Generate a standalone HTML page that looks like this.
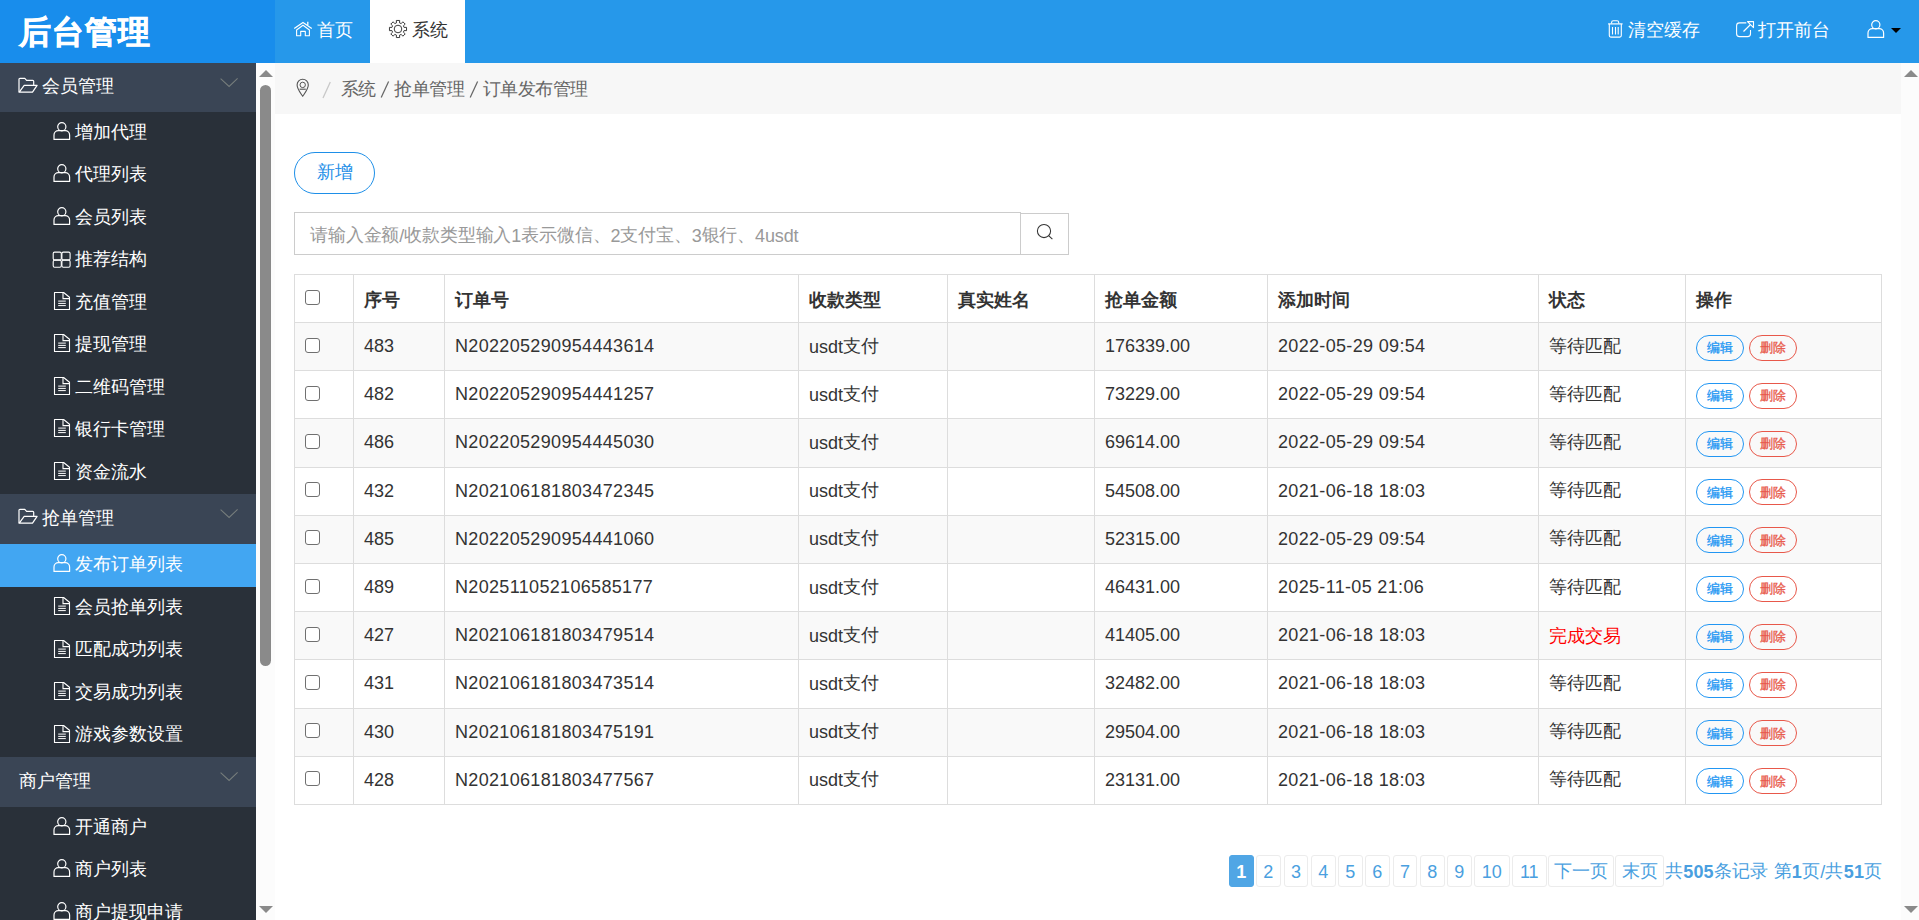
<!DOCTYPE html>
<html><head><meta charset="utf-8">
<style>
*{box-sizing:border-box;margin:0;padding:0}
html,body{width:1919px;height:920px;overflow:hidden;background:#fff;font-family:"Liberation Sans",sans-serif;color:#333}
.abs{position:absolute}
svg{display:block}
#hdr{position:absolute;left:0;top:0;width:1919px;height:63px;background:#2698ea}
#logo{position:absolute;left:0;top:0;width:275px;height:63px;background:#188dec}
#logo span{position:absolute;left:19px;top:11px;font-size:32px;font-weight:bold;-webkit-text-stroke:0.6px #fff;color:#fff;line-height:44px;letter-spacing:1px}
.tab{position:absolute;top:0;height:63px;font-size:18px;line-height:63px;color:#fff}
.tab .ic{position:absolute}
.tab span{position:absolute;top:0}
#side{position:absolute;left:0;top:63px;width:256px;height:857px;background:#293039;overflow:hidden}
.grp{position:relative;height:49px;background:#3a4555;color:#fff;font-size:18px}
.grp span{position:absolute;left:42px;top:0;line-height:49px}
.grp .chev{position:absolute;left:220px;top:15px}
.grp .ic{position:absolute;left:19px;top:15px}
.itm{position:relative;height:42.45px;color:#fff;font-size:18px}
.itm span{position:absolute;left:75px;top:0;line-height:42px}
.itm .ic{position:absolute;left:53px;top:11px}
.itm.act{background:#42a6f2}
#sbar{position:absolute;left:256px;top:63px;width:19px;height:857px;background:#fcfcfc}
#rbar{position:absolute;left:1901px;top:63px;width:18px;height:857px;background:#fcfcfc}
#crumb{position:absolute;left:275px;top:63px;width:1626px;height:51px;background:#f7f7f7;color:#666;font-size:18px}
#main{position:absolute;left:275px;top:114px;width:1626px;height:806px;background:#fff}
.btn-add{position:absolute;left:19px;top:38px;width:81px;height:42px;border:1px solid #1e8fe8;border-radius:21px;color:#1e8fe8;font-size:18px;line-height:40px;text-align:center}
.search{position:absolute;left:19px;top:98px;width:727px;height:43px;border:1px solid #ccc;font-size:18px;color:#999;line-height:47px;padding-left:15px;letter-spacing:-0.15px;white-space:nowrap}
.sbtn{position:absolute;left:745px;top:99px;width:49px;height:42px;border:1px solid #ccc;background:#fff}
table{position:absolute;left:19px;top:160px;border-collapse:collapse;font-size:18px;color:#333}
td,th{border:1px solid #ddd;height:48.2px;padding:0 10px;text-align:left;white-space:nowrap}
th{font-weight:bold;height:48px;padding-top:4px}
tr.odd td{background:#f9f9f9}
.cb{width:15px;height:15px;border:1.2px solid #707070;border-radius:3px;background:#fff;position:relative;left:-0.5px;top:-1.5px}
th .cb{top:-3px}
td.ls{letter-spacing:0.33px}
.op{display:inline-block;width:48px;height:26px;border:1px solid #2196f3;border-radius:13px;color:#2196f3;font-size:13px;line-height:24px;text-align:center;font-weight:normal;-webkit-text-stroke:0.3px currentColor;vertical-align:middle;position:relative;top:1px}
.op i.c{top:0.5px}
.op.del{border-color:#e8584a;color:#e8584a;margin-left:5px}
.pg{position:absolute;top:741px;height:32px;border:1px solid #ececec;border-radius:3px;color:#4a9fe0;font-size:18px;line-height:32px;text-align:center}
.pg.on{background:#50a6e5;border-color:#50a6e5;color:#fff;font-weight:bold}
.tab.on{background:#fff;color:#333}
.caret{position:absolute;left:24px;top:28px;width:0;height:0;border-left:5px solid transparent;border-right:5px solid transparent;border-top:5px solid #000}
.arr{position:absolute;left:3px;width:0;height:0;border-left:7px solid transparent;border-right:7px solid transparent}
.arr.up{top:7px;border-bottom:7px solid #8a8a8a}
.arr.dn{top:843px;border-top:7px solid #8a8a8a}
.thumb{position:absolute;left:4px;top:22px;width:11px;height:581px;border-radius:6px;background:#8a8a8a}
#crumb .sep{position:absolute;left:47px;top:0;line-height:51px;color:#ccc}
#crumb .path{position:absolute;left:66px;top:2px;line-height:51px;letter-spacing:-0.55px}
#crumb .bs{display:inline-block;width:18.5px;vertical-align:-2px}
#crumb .bs svg{margin-left:0.5px}
td.red{color:#ff0000}
td.red i.c{top:0}
.pginfo{position:absolute;left:1390px;top:743px;line-height:31px;font-size:18px;color:#4a9fe0;white-space:nowrap;letter-spacing:0.2px}
.pginfo b{font-weight:bold}
i.c{font-style:normal;position:relative;top:-1px}
</style></head><body>
<div id="hdr">
  <div id="logo"><span><i class="c">后台管理</i></span></div>
  <div class="tab" style="left:275px;width:95px"><svg class="ic" width="20" height="18" viewBox="0 0 20 18" style="position:absolute;left:18px;top:20px" fill="none" stroke="#fff"><path d="M1.2 8.6L10 2.4l8.8 6.2" stroke-width="1.2" stroke-linejoin="round"/><path d="M14.8 1.8v3.4" stroke-width="1.3"/><path d="M3.6 15.8V10L10 5.2l6.4 4.8v5.8h-4.1v-4.4H7.7v4.4z" stroke-width="1.1" stroke-linejoin="round"/></svg><span style="left:42px"><i class="c">首页</i></span></div>
  <div class="tab on" style="left:370px;width:95px"><svg class="ic" width="20" height="20" viewBox="0 0 20 20" style="position:absolute;left:17.8px;top:18.9px" fill="none" stroke="#333"><path d="M8.48 3.89 L8.34 1.46 L11.66 1.46 L11.52 3.89 L13.24 4.60 L14.86 2.79 L17.21 5.14 L15.40 6.76 L16.11 8.48 L18.54 8.34 L18.54 11.66 L16.11 11.52 L15.40 13.24 L17.21 14.86 L14.86 17.21 L13.24 15.40 L11.52 16.11 L11.66 18.54 L8.34 18.54 L8.48 16.11 L6.76 15.40 L5.14 17.21 L2.79 14.86 L4.60 13.24 L3.89 11.52 L1.46 11.66 L1.46 8.34 L3.89 8.48 L4.60 6.76 L2.79 5.14 L5.14 2.79 L6.76 4.60Z" stroke-width="0.95" stroke-linejoin="round"/><circle cx="10" cy="10" r="3.8" stroke-width="0.95"/></svg><span style="left:42px"><i class="c">系统</i></span></div>
  <div class="tab" style="left:1608px;width:100px"><svg class="ic" width="17" height="20" viewBox="0 0 17 20" style="position:absolute;left:-1px;top:19px" fill="none" stroke="#fff"><path d="M1.1 4.9h14.5" stroke-width="1.2"/><path d="M4.6 4.6V3.5c0-1 .7-1.8 1.7-1.8h3.7c1 0 1.7.8 1.7 1.8v1.1" stroke-width="1.1"/><path d="M2.3 5v11.6c0 .9.6 1.5 1.5 1.5h9c.9 0 1.5-.6 1.5-1.5V5" stroke-width="1.1"/><path d="M5.5 8v7.5M8.5 8v7.5M11.2 8v7.5" stroke-width="1.1"/></svg><span style="left:20px"><i class="c">清空缓存</i></span></div>
  <div class="tab" style="left:1736px;width:100px"><svg class="ic" width="20" height="19" viewBox="0 0 20 19" style="position:absolute;left:-1px;top:20px" fill="none" stroke="#fff"><path d="M11.3 2.9H4.5c-1.6 0-2.9 1.3-2.9 2.9v7.9c0 1.6 1.3 2.9 2.9 2.9h8.1c1.6 0 2.9-1.3 2.9-2.9V10" stroke-width="1.1"/><path d="M12.5 1.6h6v6z" stroke-width="1.1" stroke-linejoin="round"/><path d="M8.5 11.5l6.8-6.7" stroke-width="1.2"/></svg><span style="left:22px"><i class="c">打开前台</i></span></div>
  <div class="tab" style="left:1867px;width:40px"><svg class="ic" width="19" height="20" viewBox="0 0 19 20" style="position:absolute;left:-0.5px;top:19px" fill="none" stroke="#fff"><circle cx="8.8" cy="5.8" r="4.1" stroke-width="1.2"/><path d="M1 18.4v-4.3c0-2.4 2-4.4 4.4-4.4h6.8c2.4 0 4.4 2 4.4 4.4v4.3z" stroke-width="1.2" stroke-linejoin="round"/></svg><div class="caret"></div></div>
</div>
<div id="side"><div class="grp" style="height:49px"><svg class="ic" width="20" height="17" viewBox="0 0 20 17" style="left:18px;top:14px" fill="none"><path d="M1 15.2V2.3c0-.6.4-1 1-1h4.8l1.8 2h6.1c.6 0 1 .4 1 1V8.3" stroke="#fff" stroke-width="1.2" stroke-linejoin="round"/><path d="M1.2 15.2L6.2 8.3h12.9l-4.6 6.9z" stroke="#fff" stroke-width="1.2" stroke-linejoin="round"/></svg><span style="left:42px;line-height:49px"><i class="c">会员管理</i></span><svg class="chev" width="19" height="10" viewBox="0 0 19 10" style="" fill="none"><path d="M.6 .6L9.1 8.5 17.6 .4" stroke="#767d7c" stroke-width="1.05"/></svg></div><div class="itm" style="height:42.44444444444444px"><svg class="ic" width="19" height="20" viewBox="0 0 19 20" style="left:53px;top:9px" fill="none"><circle cx="8.8" cy="5.8" r="4.1" stroke="#fff" stroke-width="1.2"/><path d="M1 18.4v-4.3c0-2.4 2-4.4 4.4-4.4h6.8c2.4 0 4.4 2 4.4 4.4v4.3z" stroke="#fff" stroke-width="1.2" stroke-linejoin="round"/></svg><span style="line-height:42.44444444444444px"><i class="c">增加代理</i></span></div><div class="itm" style="height:42.44444444444444px"><svg class="ic" width="19" height="20" viewBox="0 0 19 20" style="left:53px;top:9px" fill="none"><circle cx="8.8" cy="5.8" r="4.1" stroke="#fff" stroke-width="1.2"/><path d="M1 18.4v-4.3c0-2.4 2-4.4 4.4-4.4h6.8c2.4 0 4.4 2 4.4 4.4v4.3z" stroke="#fff" stroke-width="1.2" stroke-linejoin="round"/></svg><span style="line-height:42.44444444444444px"><i class="c">代理列表</i></span></div><div class="itm" style="height:42.44444444444444px"><svg class="ic" width="19" height="20" viewBox="0 0 19 20" style="left:53px;top:9px" fill="none"><circle cx="8.8" cy="5.8" r="4.1" stroke="#fff" stroke-width="1.2"/><path d="M1 18.4v-4.3c0-2.4 2-4.4 4.4-4.4h6.8c2.4 0 4.4 2 4.4 4.4v4.3z" stroke="#fff" stroke-width="1.2" stroke-linejoin="round"/></svg><span style="line-height:42.44444444444444px"><i class="c">会员列表</i></span></div><div class="itm" style="height:42.44444444444444px"><svg class="ic" width="20" height="18" viewBox="0 0 20 18" style="left:52px;top:11.2px" fill="none"><rect x="1.2" y="1.1" width="8.1" height="7.8" rx="1.4" stroke="#fff" stroke-width="1.1"/><rect x="9.9" y="1.1" width="8.2" height="7.8" rx="1.4" stroke="#fff" stroke-width="1.1"/><rect x="1.2" y="9.3" width="8.1" height="6.9" rx="1.4" stroke="#fff" stroke-width="1.1"/><rect x="9.9" y="9.3" width="8.2" height="6.9" rx="1.4" stroke="#fff" stroke-width="1.1"/></svg><span style="line-height:42.44444444444444px"><i class="c">推荐结构</i></span></div><div class="itm" style="height:42.44444444444444px"><svg class="ic" width="18" height="20" viewBox="0 0 18 20" style="left:53px;top:9.2px" fill="none"><path d="M1.5 1.5h9.1l5.9 4.8v12.2H1.5z" stroke="#fff" stroke-width="1.1" stroke-linejoin="round"/><path d="M10 1.6v6h6.4" stroke="#fff" stroke-width="1.1"/><path d="M5.2 10.1h7.6M5.2 12.4h7.6M5.2 14.6h7.6" stroke="#fff" stroke-width="1"/></svg><span style="line-height:42.44444444444444px"><i class="c">充值管理</i></span></div><div class="itm" style="height:42.44444444444444px"><svg class="ic" width="18" height="20" viewBox="0 0 18 20" style="left:53px;top:9.2px" fill="none"><path d="M1.5 1.5h9.1l5.9 4.8v12.2H1.5z" stroke="#fff" stroke-width="1.1" stroke-linejoin="round"/><path d="M10 1.6v6h6.4" stroke="#fff" stroke-width="1.1"/><path d="M5.2 10.1h7.6M5.2 12.4h7.6M5.2 14.6h7.6" stroke="#fff" stroke-width="1"/></svg><span style="line-height:42.44444444444444px"><i class="c">提现管理</i></span></div><div class="itm" style="height:42.44444444444444px"><svg class="ic" width="18" height="20" viewBox="0 0 18 20" style="left:53px;top:9.2px" fill="none"><path d="M1.5 1.5h9.1l5.9 4.8v12.2H1.5z" stroke="#fff" stroke-width="1.1" stroke-linejoin="round"/><path d="M10 1.6v6h6.4" stroke="#fff" stroke-width="1.1"/><path d="M5.2 10.1h7.6M5.2 12.4h7.6M5.2 14.6h7.6" stroke="#fff" stroke-width="1"/></svg><span style="line-height:42.44444444444444px"><i class="c">二维码管理</i></span></div><div class="itm" style="height:42.44444444444444px"><svg class="ic" width="18" height="20" viewBox="0 0 18 20" style="left:53px;top:9.2px" fill="none"><path d="M1.5 1.5h9.1l5.9 4.8v12.2H1.5z" stroke="#fff" stroke-width="1.1" stroke-linejoin="round"/><path d="M10 1.6v6h6.4" stroke="#fff" stroke-width="1.1"/><path d="M5.2 10.1h7.6M5.2 12.4h7.6M5.2 14.6h7.6" stroke="#fff" stroke-width="1"/></svg><span style="line-height:42.44444444444444px"><i class="c">银行卡管理</i></span></div><div class="itm" style="height:42.44444444444444px"><svg class="ic" width="18" height="20" viewBox="0 0 18 20" style="left:53px;top:9.2px" fill="none"><path d="M1.5 1.5h9.1l5.9 4.8v12.2H1.5z" stroke="#fff" stroke-width="1.1" stroke-linejoin="round"/><path d="M10 1.6v6h6.4" stroke="#fff" stroke-width="1.1"/><path d="M5.2 10.1h7.6M5.2 12.4h7.6M5.2 14.6h7.6" stroke="#fff" stroke-width="1"/></svg><span style="line-height:42.44444444444444px"><i class="c">资金流水</i></span></div><div class="grp" style="height:50px"><svg class="ic" width="20" height="17" viewBox="0 0 20 17" style="left:18px;top:14px" fill="none"><path d="M1 15.2V2.3c0-.6.4-1 1-1h4.8l1.8 2h6.1c.6 0 1 .4 1 1V8.3" stroke="#fff" stroke-width="1.2" stroke-linejoin="round"/><path d="M1.2 15.2L6.2 8.3h12.9l-4.6 6.9z" stroke="#fff" stroke-width="1.2" stroke-linejoin="round"/></svg><span style="left:42px;line-height:50px"><i class="c">抢单管理</i></span><svg class="chev" width="19" height="10" viewBox="0 0 19 10" style="" fill="none"><path d="M.6 .6L9.1 8.5 17.6 .4" stroke="#767d7c" stroke-width="1.05"/></svg></div><div class="itm act" style="height:43px"><svg class="ic" width="19" height="20" viewBox="0 0 19 20" style="left:53px;top:9px" fill="none"><circle cx="8.8" cy="5.8" r="4.1" stroke="#fff" stroke-width="1.2"/><path d="M1 18.4v-4.3c0-2.4 2-4.4 4.4-4.4h6.8c2.4 0 4.4 2 4.4 4.4v4.3z" stroke="#fff" stroke-width="1.2" stroke-linejoin="round"/></svg><span style="line-height:43px"><i class="c">发布订单列表</i></span></div><div class="itm" style="height:42.5px"><svg class="ic" width="18" height="20" viewBox="0 0 18 20" style="left:53px;top:9.2px" fill="none"><path d="M1.5 1.5h9.1l5.9 4.8v12.2H1.5z" stroke="#fff" stroke-width="1.1" stroke-linejoin="round"/><path d="M10 1.6v6h6.4" stroke="#fff" stroke-width="1.1"/><path d="M5.2 10.1h7.6M5.2 12.4h7.6M5.2 14.6h7.6" stroke="#fff" stroke-width="1"/></svg><span style="line-height:42.5px"><i class="c">会员抢单列表</i></span></div><div class="itm" style="height:42.5px"><svg class="ic" width="18" height="20" viewBox="0 0 18 20" style="left:53px;top:9.2px" fill="none"><path d="M1.5 1.5h9.1l5.9 4.8v12.2H1.5z" stroke="#fff" stroke-width="1.1" stroke-linejoin="round"/><path d="M10 1.6v6h6.4" stroke="#fff" stroke-width="1.1"/><path d="M5.2 10.1h7.6M5.2 12.4h7.6M5.2 14.6h7.6" stroke="#fff" stroke-width="1"/></svg><span style="line-height:42.5px"><i class="c">匹配成功列表</i></span></div><div class="itm" style="height:42.5px"><svg class="ic" width="18" height="20" viewBox="0 0 18 20" style="left:53px;top:9.2px" fill="none"><path d="M1.5 1.5h9.1l5.9 4.8v12.2H1.5z" stroke="#fff" stroke-width="1.1" stroke-linejoin="round"/><path d="M10 1.6v6h6.4" stroke="#fff" stroke-width="1.1"/><path d="M5.2 10.1h7.6M5.2 12.4h7.6M5.2 14.6h7.6" stroke="#fff" stroke-width="1"/></svg><span style="line-height:42.5px"><i class="c">交易成功列表</i></span></div><div class="itm" style="height:42.5px"><svg class="ic" width="18" height="20" viewBox="0 0 18 20" style="left:53px;top:9.2px" fill="none"><path d="M1.5 1.5h9.1l5.9 4.8v12.2H1.5z" stroke="#fff" stroke-width="1.1" stroke-linejoin="round"/><path d="M10 1.6v6h6.4" stroke="#fff" stroke-width="1.1"/><path d="M5.2 10.1h7.6M5.2 12.4h7.6M5.2 14.6h7.6" stroke="#fff" stroke-width="1"/></svg><span style="line-height:42.5px"><i class="c">游戏参数设置</i></span></div><div class="grp" style="height:50px"><span style="left:19px;line-height:50px"><i class="c">商户管理</i></span><svg class="chev" width="19" height="10" viewBox="0 0 19 10" style="" fill="none"><path d="M.6 .6L9.1 8.5 17.6 .4" stroke="#767d7c" stroke-width="1.05"/></svg></div><div class="itm" style="height:42.5px"><svg class="ic" width="19" height="20" viewBox="0 0 19 20" style="left:53px;top:9px" fill="none"><circle cx="8.8" cy="5.8" r="4.1" stroke="#fff" stroke-width="1.2"/><path d="M1 18.4v-4.3c0-2.4 2-4.4 4.4-4.4h6.8c2.4 0 4.4 2 4.4 4.4v4.3z" stroke="#fff" stroke-width="1.2" stroke-linejoin="round"/></svg><span style="line-height:42.5px"><i class="c">开通商户</i></span></div><div class="itm" style="height:42.5px"><svg class="ic" width="19" height="20" viewBox="0 0 19 20" style="left:53px;top:9px" fill="none"><circle cx="8.8" cy="5.8" r="4.1" stroke="#fff" stroke-width="1.2"/><path d="M1 18.4v-4.3c0-2.4 2-4.4 4.4-4.4h6.8c2.4 0 4.4 2 4.4 4.4v4.3z" stroke="#fff" stroke-width="1.2" stroke-linejoin="round"/></svg><span style="line-height:42.5px"><i class="c">商户列表</i></span></div><div class="itm" style="height:42.5px"><svg class="ic" width="19" height="20" viewBox="0 0 19 20" style="left:53px;top:9px" fill="none"><circle cx="8.8" cy="5.8" r="4.1" stroke="#fff" stroke-width="1.2"/><path d="M1 18.4v-4.3c0-2.4 2-4.4 4.4-4.4h6.8c2.4 0 4.4 2 4.4 4.4v4.3z" stroke="#fff" stroke-width="1.2" stroke-linejoin="round"/></svg><span style="line-height:42.5px"><i class="c">商户提现申请</i></span></div><div class="itm" style="height:42.5px"><svg class="ic" width="19" height="20" viewBox="0 0 19 20" style="left:53px;top:9px" fill="none"><circle cx="8.8" cy="5.8" r="4.1" stroke="#fff" stroke-width="1.2"/><path d="M1 18.4v-4.3c0-2.4 2-4.4 4.4-4.4h6.8c2.4 0 4.4 2 4.4 4.4v4.3z" stroke="#fff" stroke-width="1.2" stroke-linejoin="round"/></svg><span style="line-height:42.5px"><i class="c">商户订单</i></span></div></div>
<div id="sbar"><div class="arr up"></div><div class="thumb"></div><div class="arr dn"></div></div>
<div id="crumb"><svg class="ic" width="16" height="20" viewBox="0 0 16 20" style="position:absolute;left:20px;top:15px" fill="none" stroke="#555"><path d="M7.7 18.3C5.3 14.6 2.1 10.6 2.1 6.9a5.6 5.6 0 0 1 11.2 0c0 3.7-3.2 7.7-5.6 11.4z" stroke-width="1.1" stroke-linejoin="round"/><circle cx="7.7" cy="6.9" r="2.7" stroke-width="1"/><path d="M4.6 11.2h6.2" stroke-width="1.1"/></svg><svg width="10" height="18" style="position:absolute;left:47px;top:18px" fill="none"><path d="M1 17L8.3 1" stroke="#c8c8c8" stroke-width="1.3"/></svg><span class="path"><i class="c">系统</i><b class="bs"><svg width="18" height="17" viewBox="0 0 18 17" fill="none" style="display:inline-block"><path d="M5.2 16.5L12.6 0.5" stroke="#666" stroke-width="1.25"/></svg></b><i class="c">抢单管理</i><b class="bs"><svg width="18" height="17" viewBox="0 0 18 17" fill="none" style="display:inline-block"><path d="M5.2 16.5L12.6 0.5" stroke="#666" stroke-width="1.25"/></svg></b><i class="c">订单发布管理</i></span></div>
<div id="main">
  <div class="btn-add"><i class="c">新增</i></div>
  <div class="search"><i class="c">请输入金额</i>/<i class="c">收款类型输入</i>1<i class="c">表示微信、</i>2<i class="c">支付宝、</i>3<i class="c">银行、</i>4usdt</div>
  <div class="sbtn"><svg class="ic" width="19" height="19" viewBox="0 0 19 19" style="position:absolute;left:15px;top:9px" fill="none" stroke="#333"><circle cx="8" cy="8" r="6.6" stroke-width="1.05"/><path d="M12.6 12.6l3.8 3.6" stroke-width="1.1"/></svg></div>
  <table><colgroup><col style="width:59px"><col style="width:91px"><col style="width:354px"><col style="width:149px"><col style="width:147px"><col style="width:173px"><col style="width:271px"><col style="width:147px"><col style="width:196px"></colgroup><tr class="hd"><th><div class="cb"></div></th><th><i class="c">序号</i></th><th><i class="c">订单号</i></th><th><i class="c">收款类型</i></th><th><i class="c">真实姓名</i></th><th><i class="c">抢单金额</i></th><th><i class="c">添加时间</i></th><th><i class="c">状态</i></th><th><i class="c">操作</i></th></tr><tr class="odd"><td><div class="cb"></div></td><td>483</td><td class="ls">N202205290954443614</td><td>usdt<i class="c">支付</i></td><td></td><td>176339.00</td><td class="ls">2022-05-29 09:54</td><td><i class="c">等待匹配</i></td><td><span class="op"><i class="c">编辑</i></span><span class="op del"><i class="c">删除</i></span></td></tr><tr class=""><td><div class="cb"></div></td><td>482</td><td class="ls">N202205290954441257</td><td>usdt<i class="c">支付</i></td><td></td><td>73229.00</td><td class="ls">2022-05-29 09:54</td><td><i class="c">等待匹配</i></td><td><span class="op"><i class="c">编辑</i></span><span class="op del"><i class="c">删除</i></span></td></tr><tr class="odd"><td><div class="cb"></div></td><td>486</td><td class="ls">N202205290954445030</td><td>usdt<i class="c">支付</i></td><td></td><td>69614.00</td><td class="ls">2022-05-29 09:54</td><td><i class="c">等待匹配</i></td><td><span class="op"><i class="c">编辑</i></span><span class="op del"><i class="c">删除</i></span></td></tr><tr class=""><td><div class="cb"></div></td><td>432</td><td class="ls">N202106181803472345</td><td>usdt<i class="c">支付</i></td><td></td><td>54508.00</td><td class="ls">2021-06-18 18:03</td><td><i class="c">等待匹配</i></td><td><span class="op"><i class="c">编辑</i></span><span class="op del"><i class="c">删除</i></span></td></tr><tr class="odd"><td><div class="cb"></div></td><td>485</td><td class="ls">N202205290954441060</td><td>usdt<i class="c">支付</i></td><td></td><td>52315.00</td><td class="ls">2022-05-29 09:54</td><td><i class="c">等待匹配</i></td><td><span class="op"><i class="c">编辑</i></span><span class="op del"><i class="c">删除</i></span></td></tr><tr class=""><td><div class="cb"></div></td><td>489</td><td class="ls">N202511052106585177</td><td>usdt<i class="c">支付</i></td><td></td><td>46431.00</td><td class="ls">2025-11-05 21:06</td><td><i class="c">等待匹配</i></td><td><span class="op"><i class="c">编辑</i></span><span class="op del"><i class="c">删除</i></span></td></tr><tr class="odd"><td><div class="cb"></div></td><td>427</td><td class="ls">N202106181803479514</td><td>usdt<i class="c">支付</i></td><td></td><td>41405.00</td><td class="ls">2021-06-18 18:03</td><td class="red"><i class="c">完成交易</i></td><td><span class="op"><i class="c">编辑</i></span><span class="op del"><i class="c">删除</i></span></td></tr><tr class=""><td><div class="cb"></div></td><td>431</td><td class="ls">N202106181803473514</td><td>usdt<i class="c">支付</i></td><td></td><td>32482.00</td><td class="ls">2021-06-18 18:03</td><td><i class="c">等待匹配</i></td><td><span class="op"><i class="c">编辑</i></span><span class="op del"><i class="c">删除</i></span></td></tr><tr class="odd"><td><div class="cb"></div></td><td>430</td><td class="ls">N202106181803475191</td><td>usdt<i class="c">支付</i></td><td></td><td>29504.00</td><td class="ls">2021-06-18 18:03</td><td><i class="c">等待匹配</i></td><td><span class="op"><i class="c">编辑</i></span><span class="op del"><i class="c">删除</i></span></td></tr><tr class=""><td><div class="cb"></div></td><td>428</td><td class="ls">N202106181803477567</td><td>usdt<i class="c">支付</i></td><td></td><td>23131.00</td><td class="ls">2021-06-18 18:03</td><td><i class="c">等待匹配</i></td><td><span class="op"><i class="c">编辑</i></span><span class="op del"><i class="c">删除</i></span></td></tr></table>
  <div class="pg on" style="left:954px;width:24.5px">1</div><div class="pg" style="left:981px;width:24.5px">2</div><div class="pg" style="left:1009px;width:24px">3</div><div class="pg" style="left:1036px;width:24.5px">4</div><div class="pg" style="left:1063px;width:24.5px">5</div><div class="pg" style="left:1090px;width:24.5px">6</div><div class="pg" style="left:1118px;width:24px">7</div><div class="pg" style="left:1145px;width:24.5px">8</div><div class="pg" style="left:1172px;width:24.5px">9</div><div class="pg" style="left:1199px;width:35.5px">10</div><div class="pg" style="left:1237px;width:34.5px">11</div><div class="pg" style="left:1273px;width:66px"><i class="c">下一页</i></div><div class="pg" style="left:1340px;width:49px"><i class="c">末页</i></div><div class="pginfo"><i class="c">共</i><b>505</b><i class="c">条记录</i> <i class="c">第</i><b>1</b><i class="c">页</i>/<i class="c">共</i><b>51</b><i class="c">页</i></div>
</div>
<div id="rbar"><div class="arr up"></div><div class="arr dn"></div></div>
</body></html>
